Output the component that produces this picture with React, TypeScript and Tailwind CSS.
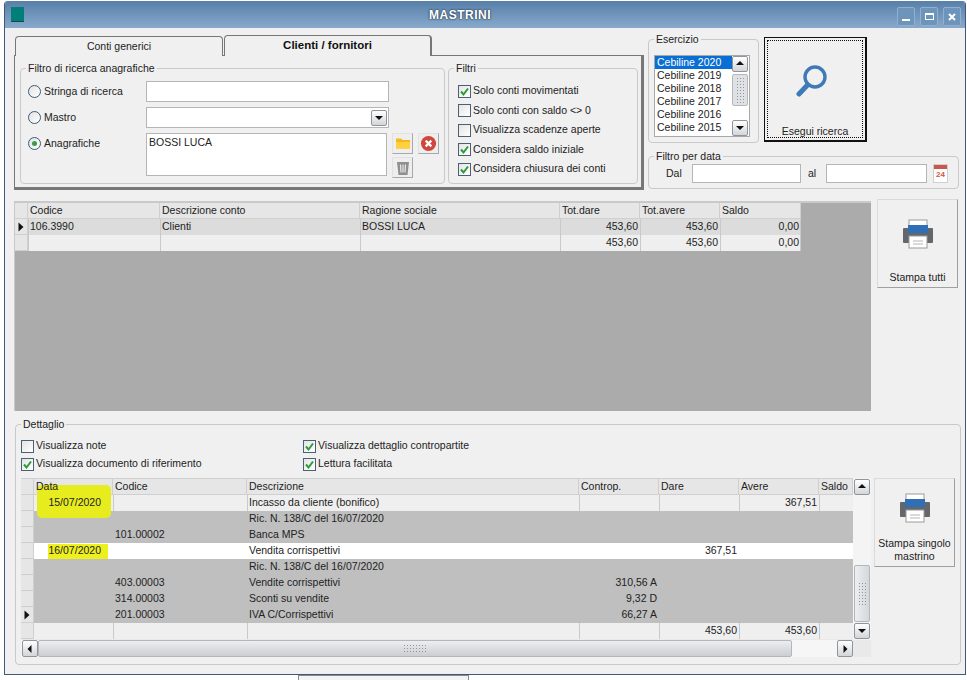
import type { ReactNode } from 'react'

const FONT = "font-['Liberation_Sans',sans-serif]"

type CellRow = { bg: string; mark?: boolean; cells: string[] }

const Fieldset = ({ title, className, inner = '', children }: { title: string; className: string; inner?: string; children: ReactNode }) => (
  <fieldset className={`border border-[#c9c9c9] rounded-[4px] min-w-0 shrink-0 ${className}`}>
    <legend className="ml-[5px] px-[2px] text-[10.5px] leading-[13px] text-[#222]">{title}</legend>
    <div className={inner}>{children}</div>
  </fieldset>
)

const Check = ({ checked, label, className = '' }: { checked?: boolean; label: string; className?: string }) => (
  <div className={`flex items-center gap-[2px] h-[16px] ${className}`}>
    <span className="w-[13px] h-[13px] border border-[#4a6074] bg-gradient-to-br from-[#e4e4e4] to-white flex items-center justify-center shrink-0">
      {checked && (
        <svg viewBox="0 0 11 11" className="w-[11px] h-[11px]">
          <path d="M2 5.5 4.5 8.5 9 2.5" fill="none" stroke="#2c9b3a" strokeWidth="2" />
        </svg>
      )}
    </span>
    <span className="text-[10.5px] whitespace-nowrap text-[#222]">{label}</span>
  </div>
)

const Radio = ({ checked, label }: { checked?: boolean; label: string }) => (
  <div className="flex items-center gap-[3px] w-[118px] shrink-0">
    <span className="w-[13px] h-[13px] rounded-full border border-[#3d5a78] bg-gradient-to-br from-[#e2e2e2] to-white flex items-center justify-center shrink-0">
      {checked && <span className="w-[5px] h-[5px] rounded-full bg-[#3b9a4a]" />}
    </span>
    <span className="text-[10.5px] text-[#222] whitespace-nowrap">{label}</span>
  </div>
)

const ArrowBtn = ({ dir, className = '' }: { dir: 'up' | 'down' | 'left' | 'right'; className?: string }) => {
  const shapes = { up: '1,6 5,2 9,6', down: '1,3 5,7 9,3', left: '6.5,1 2.5,5 6.5,9', right: '3.5,1 7.5,5 3.5,9' }
  return (
    <span className={`flex items-center justify-center border border-[#8f959b] rounded-[2px] bg-gradient-to-b from-white to-[#d3d5d8] shrink-0 ${className}`}>
      <svg viewBox="0 0 10 10" className="w-[10px] h-[10px]">
        <polygon points={shapes[dir]} fill="#111" />
      </svg>
    </span>
  )
}

const Grip = ({ className }: { className: string }) => (
  <span className={`bg-[radial-gradient(#8f959b_0.7px,transparent_0.8px)] bg-[length:3px_3px] ${className}`} />
)

const PrinterIcon = () => (
  <svg viewBox="0 0 32 30" className="w-[32px] h-[30px]">
    <rect x="7" y="1" width="18" height="8" fill="#fff" stroke="#9a9a9a" />
    <path d="M2 9h28a1 1 0 0 1 1 1v13a1 1 0 0 1-1 1H2a1 1 0 0 1-1-1V10a1 1 0 0 1 1-1z" fill="#63676b" />
    <rect x="6" y="6" width="20" height="8" fill="#2f6fb7" />
    <rect x="7" y="17" width="18" height="12" fill="#fff" stroke="#9a9a9a" />
    <path d="M11 22h10M11 25h10" stroke="#b5b5b5" />
  </svg>
)

const MIDDLE_WIDTHS = 'grid-cols-[13px_132px_200px_200px_80px_80px_81px]'
const DETAIL_WIDTHS = 'grid-cols-[13px_79px_134px_332px_80px_80px_80px_34px]'

const GridRow = ({ row, cols }: { row: CellRow; cols: string }) => (
  <div className={`grid ${cols} h-[16px] ${row.bg}`}>
    <span className="bg-[#e6e6e6] border-r border-b border-[#cfcfcf] flex items-center justify-center">
      {row.mark && (
        <svg viewBox="0 0 6 10" className="w-[6px] h-[10px]">
          <polygon points="0.5,0.5 5.5,5 0.5,9.5" fill="#111" />
        </svg>
      )}
    </span>
    {row.cells.map((cell, i) => {
      const right = cell.startsWith('>')
      const date = cell.startsWith('^')
      return (
        <span
          key={i}
          className={`relative z-10 px-[2px] text-[10.5px] leading-[15px] text-[#222] whitespace-nowrap overflow-hidden ${right ? 'text-right' : ''} ${date ? 'text-right pr-[12px]' : ''}`}
        >
          {right || date ? cell.slice(1) : cell}
        </span>
      )
    })}
  </div>
)

const header1 = ['Codice', 'Descrizione conto', 'Ragione sociale', 'Tot.dare', 'Tot.avere', 'Saldo']
const rows1: CellRow[] = [
  { bg: 'bg-[#dcdcdc]', mark: true, cells: ['106.3990', 'Clienti', 'BOSSI LUCA', '>453,60', '>453,60', '>0,00'] },
  { bg: 'bg-[#efefef]', cells: ['', '', '', '>453,60', '>453,60', '>0,00'] },
]

const header2 = ['Data', 'Codice', 'Descrizione', 'Controp.', 'Dare', 'Avere', 'Saldo']
const GRAY = 'bg-[#bfbfbf]'
const rows2: CellRow[] = [
  { bg: 'bg-[#efefef]', cells: ['^15/07/2020', '', 'Incasso da cliente (bonifico)', '', '', '>367,51', ''] },
  { bg: GRAY, cells: ['', '', 'Ric. N. 138/C del 16/07/2020', '', '', '', ''] },
  { bg: GRAY, cells: ['', '101.00002', 'Banca MPS', '', '', '', ''] },
  { bg: 'bg-white', cells: ['^16/07/2020', '', 'Vendita corrispettivi', '', '>367,51', '', ''] },
  { bg: GRAY, cells: ['', '', 'Ric. N. 138/C del 16/07/2020', '', '', '', ''] },
  { bg: GRAY, cells: ['', '403.00003', 'Vendite corrispettivi', '>310,56 A', '', '', ''] },
  { bg: GRAY, cells: ['', '314.00003', 'Sconti su vendite', '>9,32 D', '', '', ''] },
  { bg: GRAY, mark: true, cells: ['', '201.00003', 'IVA C/Corrispettivi', '>66,27 A', '', '', ''] },
  { bg: 'bg-[#efefef]', cells: ['', '', '', '', '>453,60', '>453,60', ''] },
]

const GridHeader = ({ cols, labels }: { cols: string; labels: string[] }) => (
  <div className={`grid ${cols} h-[16px] bg-[#e6e6e6] border-b border-[#d0d0d0]`}>
    <span className="border-r border-[#cfcfcf]" />
    {labels.map((label) => (
      <span key={label} className="relative z-10 px-[2px] text-[10.5px] leading-[15px] text-[#222] border-r border-[#cfcfcf]">
        {label}
      </span>
    ))}
  </div>
)

// separatori verticali delle righe con sfondo chiaro
const RowLines = ({ positions, top, height }: { positions: string[]; top: string; height: string }) => (
  <>
    {positions.map((p) => (
      <span key={p} className={`absolute ${p} ${top} ${height} w-px bg-[#c9c9c9] z-0`} />
    ))}
  </>
)

const ToolBtn = ({ children, className = '' }: { children: ReactNode; className?: string }) => (
  <span className={`w-[21px] h-[21px] flex items-center justify-center bg-[#eeeeee] border-r border-b border-[#a9a9a9] border-t border-l border-t-[#e2e2e2] border-l-[#e2e2e2] ${className}`}>
    {children}
  </span>
)

const PrintButton = ({ label, className }: { label: ReactNode; className: string }) => (
  <div className={`flex flex-col items-center bg-[#f0f0f0] border border-[#dadada] border-r-[#a0a0a0] border-b-[#a0a0a0] text-[10.5px] leading-[13px] text-center text-[#222] shrink-0 ${className}`}>
    {label}
  </div>
)

export default function App() {
  return (
    <div className={`${FONT} w-[967px] h-[680px] bg-white overflow-hidden flex flex-col items-start pt-px pl-[4px]`}>
      <div className="w-[962px] h-[674px] flex flex-col bg-[#f0f0f0] border-x border-b border-[#3e5a76] rounded-t-[4px] overflow-hidden shrink-0">
        {/* barra del titolo */}
        <div className="relative h-[27px] shrink-0 flex items-center justify-center pr-[50px] pt-px bg-gradient-to-b from-[#587fa8] via-[#6f95bb] to-[#88a9ca]">
          <span className="absolute left-[6px] top-[6px] w-[13px] h-[15px] bg-[#007f78] border-b border-[#0c4d48]" />
          <span className="text-[12px] font-bold tracking-[0.5px] text-white [text-shadow:0_0_2px_#2b3f55,0_0_2px_#2b3f55]">MASTRINI</span>
          <div className="absolute right-[4px] top-[6px] flex gap-[5px]">
            {['min', 'max', 'close'].map((b) => (
              <span key={b} className="w-[18px] h-[19px] rounded-[2px] border border-[#92b0cd] bg-[#6d94bb] flex items-center justify-center">
                {b === 'min' && <span className="w-[8px] h-[2px] mt-[6px] bg-white" />}
                {b === 'max' && <span className="w-[9px] h-[7px] border border-t-2 border-white" />}
                {b === 'close' && (
                  <svg viewBox="0 0 10 10" className="w-[10px] h-[10px]">
                    <path d="M2 2l6 6M8 2l-6 6" stroke="#fff" strokeWidth="2" />
                  </svg>
                )}
              </span>
            ))}
          </div>
        </div>

        <div className="flex-1 min-h-0 flex flex-col pl-[9px] pr-[4px]">
          {/* filtri in alto */}
          <div className="h-[162px] flex shrink-0">
            <div className="w-[630px] pt-[7px] shrink-0">
              <div className="flex h-[20px] pl-px">
                <div className="w-[208px] h-[20px] mt-px flex items-center justify-center bg-[#f0f0f0] border border-b-0 border-[#777] rounded-t-[4px] text-[10.5px] text-[#222]">
                  Conti generici
                </div>
                <div className="w-[208px] h-[21px] ml-px relative z-10 flex items-center justify-center bg-[#f0f0f0] border border-b-0 border-[#777] border-r-2 rounded-t-[4px] text-[11.5px] font-bold text-[#111]">
                  Clienti / fornitori
                </div>
              </div>
              <div className="h-[135px] flex gap-[3px] bg-[#f0f0f0] border border-[#777] border-r-[3px] border-b-[3px] pl-[5px]">
                <Fieldset title="Filtro di ricerca anagrafiche" className="w-[425px] h-[122px] mt-[6px]" inner="pl-[7px] pr-[4px]">
                  <div className="flex items-center h-[21px] mt-[6px]">
                    <Radio label="Stringa di ricerca" />
                    <span className="w-[243px] h-[21px] bg-white border border-[#b5b5b5]" />
                  </div>
                  <div className="flex items-center h-[21px] mt-[5px]">
                    <Radio label="Mastro" />
                    <span className="w-[243px] h-[21px] bg-white border border-[#b5b5b5] flex justify-end items-center pr-px">
                      <ArrowBtn dir="down" className="w-[16px] h-[16px]" />
                    </span>
                  </div>
                  <div className="flex items-start mt-[5px]">
                    <div className="pt-[3px]">
                      <Radio checked label="Anagrafiche" />
                    </div>
                    <div className="w-[241px] h-[43px] bg-white border border-[#b5b5b5] px-[2px] text-[10.5px] leading-[17px] text-[#222]">BOSSI LUCA</div>
                    <div className="ml-[5px] flex flex-col gap-[3px]">
                      <div className="flex gap-[5px]">
                        <ToolBtn>
                          <svg viewBox="0 0 16 13" className="w-[16px] h-[13px]">
                            <path d="M1 3V1.5h5L7.5 3H15v8.5H1z" fill="#f6b81a" />
                            <path d="M1 5h14v6.5H1z" fill="#ffd23d" />
                          </svg>
                        </ToolBtn>
                        <ToolBtn>
                          <svg viewBox="0 0 18 18" className="w-[17px] h-[17px]">
                            <circle cx="9" cy="9" r="8" fill="#d1453b" />
                            <path d="M6 6l6 6M12 6l-6 6" stroke="#fff" strokeWidth="2.4" />
                          </svg>
                        </ToolBtn>
                      </div>
                      <ToolBtn>
                        <svg viewBox="0 0 14 16" className="w-[14px] h-[16px]">
                          <path d="M1 2h12l-1.5 13h-9z" fill="#8f8f8f" />
                          <path d="M4.5 4.5l.5 8M7 4.5v8M9.5 4.5l-.5 8" stroke="#e9e9e9" strokeWidth="1.2" />
                        </svg>
                      </ToolBtn>
                    </div>
                  </div>
                </Fieldset>
                <Fieldset title="Filtri" className="w-[190px] h-[122px] mt-[6px]" inner="pl-[9px]">
                  <div className="flex flex-col gap-[3.5px] mt-[8px]">
                    <Check checked label="Solo conti movimentati" />
                    <Check label="Solo conti con saldo <> 0" />
                    <Check label="Visualizza scadenze aperte" />
                    <Check checked label="Considera saldo iniziale" />
                    <Check checked label="Considera chiusura dei conti" />
                  </div>
                </Fieldset>
              </div>
            </div>

            <div className="w-[312px] ml-[4px] shrink-0 flex flex-col">
              <div className="flex gap-[5px] h-[115px] pt-[5px]">
                <Fieldset title="Esercizio" className="w-[111px] h-[110px]" inner="pl-[5px]">
                  <div className="w-[96px] h-[82px] mt-[9px] bg-white border border-[#a8a8a8] flex">
                    <div className="flex-1 text-[10.5px] leading-[13px] text-[#222]">
                      {[2020, 2019, 2018, 2017, 2016, 2015].map((y, i) => (
                        <div key={y} className={`pl-[2px] ${i === 0 ? 'bg-[#0a6fd4] text-white' : ''}`}>{`Cebiline ${y}`}</div>
                      ))}
                    </div>
                    <div className="w-[17px] flex flex-col shrink-0">
                      <ArrowBtn dir="up" className="w-[16px] h-[16px]" />
                      <span className="w-[16px] h-[32px] mt-[2px] border border-[#b3b6ba] rounded-[2px] bg-[#dfe1e4] flex justify-center items-center">
                        <Grip className="w-[9px] h-[27px]" />
                      </span>
                      <span className="flex-1" />
                      <ArrowBtn dir="down" className="w-[16px] h-[16px]" />
                    </div>
                  </div>
                </Fieldset>
                <div className="w-[103px] h-[105px] mt-[4px] border border-[#111] border-r-2 border-b-2 p-[2px] shrink-0">
                  <div className="w-full h-full border border-dotted border-[#111] flex flex-col items-center">
                    <svg viewBox="0 0 32 34" className="w-[32px] h-[34px] mt-[23px] -ml-[6px]">
                      <circle cx="19" cy="13" r="10" fill="none" stroke="#3f7ab8" strokeWidth="3.4" />
                      <path d="M11.5 21 3 30" stroke="#3f7ab8" strokeWidth="5" strokeLinecap="round" />
                    </svg>
                    <span className="mt-auto text-[10.5px] leading-[12px] text-[#222]">Esegui ricerca</span>
                  </div>
                </div>
              </div>
              <Fieldset title="Filtro per data" className="w-[311px] h-[39px] mt-[7px]" inner="flex items-center h-[19px] mt-px pl-[17px]">
                <span className="text-[10.5px] text-[#222] w-[26px]">Dal</span>
                <span className="w-[109px] h-[19px] bg-white border border-[#b5b5b5]" />
                <span className="text-[10.5px] text-[#222] w-[25px] pl-[7px]">al</span>
                <span className="w-[101px] h-[19px] bg-white border border-[#b5b5b5]" />
                <span className="ml-[6px] w-[15px] h-[19px] border border-[#cfcfcf] bg-white flex flex-col items-center">
                  <span className="w-full h-[4px] bg-[#c9574b]" />
                  <span className="text-[8px] leading-[12px] font-bold text-[#c9574b]">24</span>
                </span>
              </Fieldset>
            </div>
          </div>

          {/* griglia mastri */}
          <div className="flex mt-[11px] shrink-0 h-[211px]">
            <div className="relative w-[857px] h-[210px] bg-[#ababab] border-t-2 border-l border-[#c9c9c9] shrink-0">
              <div className="w-[786px]">
                <GridHeader cols={MIDDLE_WIDTHS} labels={header1} />
                {rows1.map((r, i) => (
                  <GridRow key={i} row={r} cols={MIDDLE_WIDTHS} />
                ))}
              </div>
              <RowLines
                positions={['left-[13px]', 'left-[145px]', 'left-[345px]', 'left-[545px]', 'left-[625px]', 'left-[705px]', 'left-[785px]']}
                top="top-[16px]"
                height="h-[32px]"
              />
            </div>
            <PrintButton
              className="w-[81px] h-[89px] ml-[6px] -mt-[2px]"
              label={
                <>
                  <span className="mt-[19px]">
                    <PrinterIcon />
                  </span>
                  <span className="mt-auto mb-[3px]">Stampa tutti</span>
                </>
              }
            />
          </div>

          {/* dettaglio */}
          <Fieldset title="Dettaglio" className="w-[946px] h-[247px] mt-[6px] ml-px" inner="pl-[4px]">
            <div className="flex mt-[7px] pl-px">
              <div className="w-[282px] flex flex-col gap-[2px]">
                <Check label="Visualizza note" />
                <Check checked label="Visualizza documento di riferimento" />
              </div>
              <div className="flex flex-col gap-[2px]">
                <Check checked label="Visualizza dettaglio contropartite" />
                <Check checked label="Lettura facilitata" />
              </div>
            </div>
            <div className="flex mt-[6px]">
              <div className="relative w-[850px] h-[179px] ml-[1px] shrink-0 bg-[#e9e9e9]">
                <div className="w-[832px] border-t border-[#d0d0d0]">
                  <GridHeader cols={DETAIL_WIDTHS} labels={header2} />
                  {rows2.map((r, i) => (
                    <GridRow key={i} row={r} cols={DETAIL_WIDTHS} />
                  ))}
                </div>
                {/* evidenziatore giallo */}
                <span className="absolute left-[16px] top-[7px] w-[74px] h-[33px] bg-[#e7ec1e] rounded-[5px]" />
                <span className="absolute left-[27px] top-[66px] w-[60px] h-[15px] bg-[#eef01e]" />
                <RowLines positions={['left-[92px]', 'left-[226px]', 'left-[558px]', 'left-[638px]', 'left-[718px]', 'left-[798px]']} top="top-[17px]" height="h-[16px]" />
                <RowLines positions={['left-[92px]', 'left-[226px]', 'left-[558px]', 'left-[638px]', 'left-[718px]', 'left-[798px]']} top="top-[145px]" height="h-[16px]" />
                {/* scrollbar verticale */}
                <div className="absolute right-0 top-0 w-[18px] h-[162px] bg-[#f4f4f4] flex flex-col items-center">
                  <ArrowBtn dir="up" className="w-[16px] h-[16px] mt-px" />
                  <span className="w-[16px] h-[57px] mt-[70px] rounded-[2px] border border-[#b3b6ba] bg-gradient-to-r from-[#eceef0] to-[#d5d8db] flex items-center justify-center">
                    <Grip className="w-[9px] h-[24px]" />
                  </span>
                  <ArrowBtn dir="down" className="w-[16px] h-[16px] mt-px" />
                </div>
                {/* scrollbar orizzontale */}
                <div className="absolute left-0 bottom-0 w-[832px] h-[17px] flex items-center bg-[#f6f6f6]">
                  <ArrowBtn dir="left" className="w-[16px] h-[17px] ml-px" />
                  <span className="w-[754px] h-[17px] rounded-[2px] border border-[#b3b6ba] bg-gradient-to-b from-[#eceef0] to-[#cbced2] flex items-center justify-center">
                    <Grip className="w-[24px] h-[9px]" />
                  </span>
                  <ArrowBtn dir="right" className="w-[16px] h-[17px] ml-auto" />
                </div>
              </div>
              <PrintButton
                className="w-[81px] h-[89px] ml-[3px]"
                label={
                  <>
                    <span className="mt-[14px]">
                      <PrinterIcon />
                    </span>
                    <span className="mt-auto mb-[3px] whitespace-nowrap">
                      Stampa singolo
                      <br />
                      mastrino
                    </span>
                  </>
                }
              />
            </div>
          </Fieldset>
        </div>
      </div>
      <div className="w-[171px] h-[6px] ml-[294px] border-x border-t border-[#8a8a8a] bg-[#f4f4f4] shrink-0" />
    </div>
  )
}
